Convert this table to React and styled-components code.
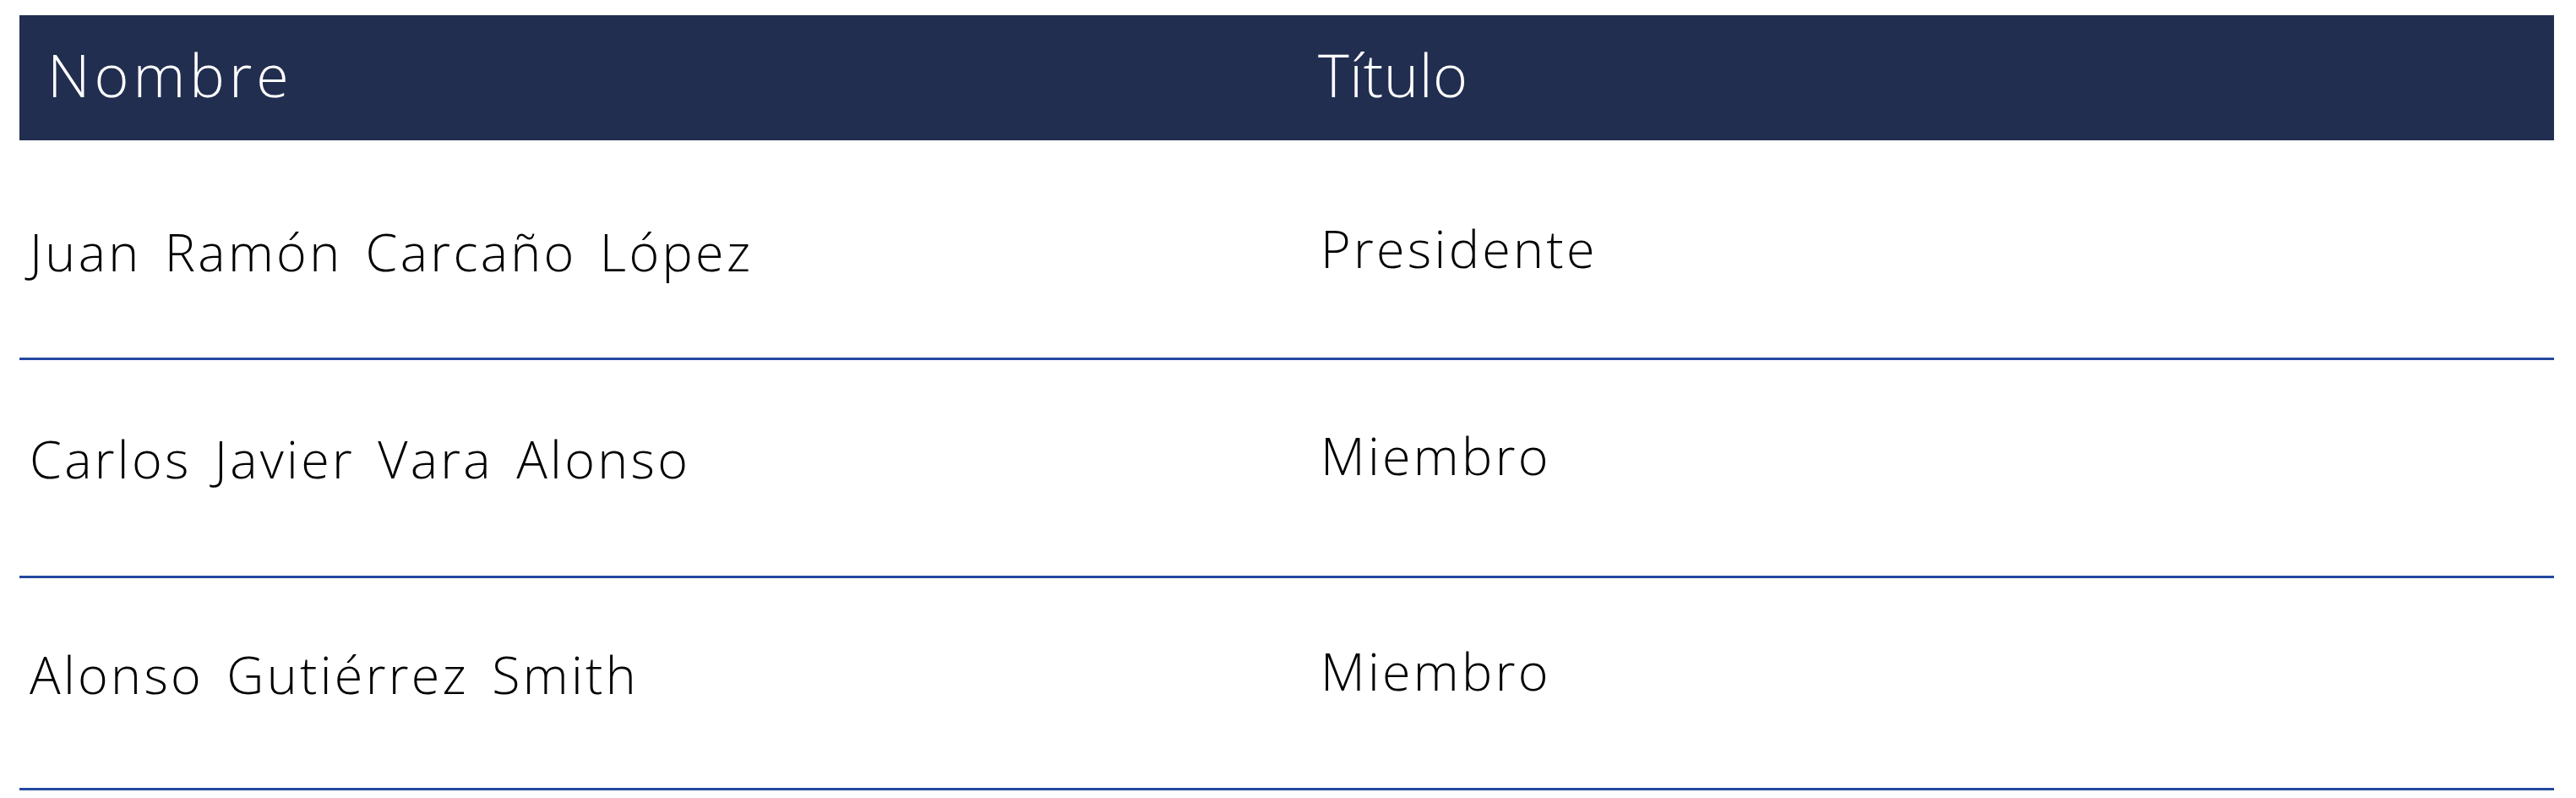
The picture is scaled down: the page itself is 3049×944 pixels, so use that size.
import React from "react";
import styled, { createGlobalStyle } from "styled-components";

const GlobalStyle = createGlobalStyle`
  html, body {
    margin: 0;
    padding: 0;
    background: #fff;
  }
  body {
    font-family: "Open Sans", "Lato", sans-serif;
    font-weight: 300;
  }
`;

const Page = styled.div`
  padding: 18px 26px 0 23px;
`;

const Table = styled.div`
  width: 3000px;
`;

const HeadRow = styled.div`
  display: grid;
  grid-template-columns: 1516px 1fr;
  height: 148px;
  background: #222e50;
  color: #fff;
`;

const HeadCell = styled.div`
  padding-left: ${(p) => p.$pad}px;
  padding-top: 35px;
  font-size: 70px;
  line-height: 1;
  letter-spacing: ${(p) => p.$spacing}px;
`;

const Row = styled.div`
  display: grid;
  grid-template-columns: 1516px 1fr;
  height: ${(p) => p.$height}px;
  box-sizing: border-box;
  border-bottom: 3px solid #23489f;
  color: #000;
`;

const Cell = styled.div`
  padding-left: ${(p) => p.$pad}px;
  padding-top: ${(p) => p.$top}px;
  font-size: 61px;
  line-height: 1;
  letter-spacing: 3.3px;
  word-spacing: 8px;
`;

const members = [
  { name: "Juan Ramón Carcaño López", title: "Presidente", height: 260, top: 101 },
  { name: "Carlos Javier Vara Alonso", title: "Miembro", height: 258, top: 86 },
  { name: "Alonso Gutiérrez Smith", title: "Miembro", height: 251, top: 83 },
];

export default function App() {
  return (
    <Page>
      <GlobalStyle />
      <Table>
        <HeadRow>
          <HeadCell $pad={33} $spacing={5}>
            Nombre
          </HeadCell>
          <HeadCell $pad={21} $spacing={0.6}>
            Título
          </HeadCell>
        </HeadRow>
        {members.map((m) => (
          <Row key={m.name} $height={m.height}>
            <Cell $pad={12} $top={m.top}>
              {m.name}
            </Cell>
            <Cell $pad={24} $top={m.top - 4}>
              {m.title}
            </Cell>
          </Row>
        ))}
      </Table>
    </Page>
  );
}
